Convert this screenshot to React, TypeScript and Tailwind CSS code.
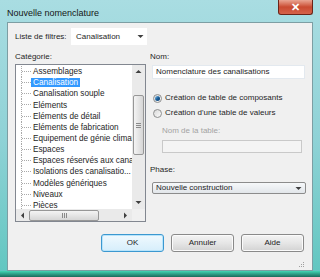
import React from 'react';

const items = [
  'Assemblages',
  'Canalisation',
  'Canalisation souple',
  'Eléments',
  'Eléments de détail',
  'Eléments de fabrication',
  'Equipement de génie climatique',
  'Espaces',
  'Espaces réservés aux canalisations',
  'Isolations des canalisatio...',
  'Modèles génériques',
  'Niveaux',
  'Pièces',
];

const Arrow = ({ dir }: { dir: 'up' | 'down' | 'left' | 'right' }) => {
  const pts = {
    up: '0.5,4 3.5,1 6.5,4',
    down: '0.5,1 3.5,4 6.5,1',
    left: '4,0.5 1,3.5 4,6.5',
    right: '1,0.5 4,3.5 1,6.5',
  }[dir];
  const w = dir === 'up' || dir === 'down' ? 7 : 5;
  const h = dir === 'up' || dir === 'down' ? 5 : 7;
  return (
    <svg width={w} height={h} viewBox={`0 0 ${w} ${h}`}>
      <polygon points={pts} fill="#404040" />
    </svg>
  );
};

const TreeLine = () => (
  <svg width="15" height="11.2" viewBox="0 0 15 11.2" className="shrink-0">
    <line x1="5.5" y1="0" x2="5.5" y2="11.2" stroke="#a8a8a8" strokeDasharray="1 1" />
    <line x1="6" y1="5.5" x2="15" y2="5.5" stroke="#a8a8a8" strokeDasharray="1 1" />
  </svg>
);

function Radio({ checked }: { checked?: boolean }) {
  return (
    <div className="w-[9px] h-[9px] rounded-full border border-[#8e8f8f] bg-gradient-to-br from-[#d9d9d9] to-[#fbfbfb] flex items-center justify-center shrink-0">
      {checked && (
        <div className="w-[5px] h-[5px] rounded-full bg-gradient-to-br from-[#8ccbf0] via-[#1a5f9a] to-[#0b3c6e]" />
      )}
    </div>
  );
}

function Button({ label, isDefault }: { label: string; isDefault?: boolean }) {
  return (
    <div
      className={
        'w-[63px] h-[18px] rounded-[3px] border flex items-center justify-center text-[8px] text-[#1e1e1e] ' +
        (isDefault
          ? 'border-[#3c98d0] bg-gradient-to-b from-[#f0f9fe] to-[#d6eefb] shadow-[inset_0_0_0_1px_#b8e4fb]'
          : 'border-[#8a8a8a] bg-gradient-to-b from-[#f4f4f4] via-[#e6e6e6] to-[#d2d2d2] shadow-[inset_0_0_0_1px_#fbfbfb]')
      }
    >
      {label}
    </div>
  );
}

export default function App() {
  return (
    <div className="w-[320px] h-[277px] overflow-hidden flex flex-col bg-gradient-to-b from-[#a9dde2] via-[#8fd2d6] to-[#5fc6c0] font-['Liberation_Sans',Arial,sans-serif]">
      {/* title bar */}
      <div className="h-[22px] flex items-start pl-[7px] pr-[7px] shrink-0">
        <div className="text-[9px] text-[#151515] mt-[7px] flex-1">Nouvelle nomenclature</div>
        <div className="w-[35px] h-[15px] rounded-b-[3px] border border-t-0 border-[#6b2418] bg-gradient-to-b from-[#e9a593] via-[#c94a31] to-[#d5634a] flex items-center justify-center text-white text-[11px] font-bold leading-none">
          ✕
        </div>
      </div>

      {/* client */}
      <div className="mx-[7px] h-[249px] bg-[#f0f0f0] border border-[#7d9ea3] flex flex-col px-[7px] pt-[5px] text-[8px] text-[#1e1e1e] shrink-0">
        <div className="flex items-center h-[17px]">
          <div className="w-[56px]">Liste de filtres:</div>
          <div className="w-[76px] h-[17px] bg-white flex items-center pl-[5px] pr-[3px]">
            <span className="flex-1">Canalisation</span>
            <Arrow dir="down" />
          </div>
        </div>

        <div className="flex mt-[7px]">
          {/* left column */}
          <div className="flex flex-col w-[131px]">
            <div className="h-[10px] leading-[10px]">Catégorie:</div>
            <div className="mt-[2px] w-[131px] h-[158px] border border-[#828790] bg-white flex flex-col">
              <div className="flex flex-1 min-h-0">
                <div className="flex-1 min-w-0 overflow-hidden pt-[1px]">
                  {items.map((it, i) => (
                    <div key={i} className="flex items-center h-[11.17px] whitespace-nowrap text-[8.2px]">
                      <TreeLine />
                      <span
                        className={
                          'px-[2px] leading-[9px] ' +
                          (i === 1 ? 'bg-[#3399ff] text-white' : 'text-[#1e1e1e]')
                        }
                      >
                        {it}
                      </span>
                    </div>
                  ))}
                </div>
                {/* vertical scrollbar */}
                <div className="w-[13px] bg-[#eaeaea] flex flex-col items-center">
                  <div className="h-[13px] flex items-center justify-center"><Arrow dir="up" /></div>
                  <div className="h-[17px]" />
                  <div className="w-[11px] h-[60px] rounded-[2px] border border-[#979797] bg-gradient-to-r from-[#f4f4f4] to-[#d6d6d6] flex flex-col items-center justify-center gap-[1px]">
                    <div className="w-[5px] h-px bg-[#8a8a8a]" />
                    <div className="w-[5px] h-px bg-[#8a8a8a]" />
                    <div className="w-[5px] h-px bg-[#8a8a8a]" />
                  </div>
                  <div className="flex-1" />
                  <div className="h-[13px] flex items-center justify-center"><Arrow dir="down" /></div>
                </div>
              </div>
              {/* horizontal scrollbar */}
              <div className="flex h-[12px]">
                <div className="flex-1 bg-[#eaeaea] flex items-center">
                  <div className="w-[13px] flex items-center justify-center"><Arrow dir="left" /></div>
                  <div className="w-[70px] h-[11px] rounded-[2px] border border-[#979797] bg-gradient-to-b from-[#f4f4f4] to-[#d6d6d6] flex items-center justify-center gap-[1px]">
                    <div className="w-px h-[5px] bg-[#8a8a8a]" />
                    <div className="w-px h-[5px] bg-[#8a8a8a]" />
                    <div className="w-px h-[5px] bg-[#8a8a8a]" />
                  </div>
                  <div className="flex-1" />
                  <div className="w-[13px] flex items-center justify-center"><Arrow dir="right" /></div>
                </div>
                <div className="w-[13px] bg-[#f0f0f0]" />
              </div>
            </div>
          </div>

          {/* right column */}
          <div className="flex flex-col ml-[4px] flex-1">
            <div className="h-[10px] leading-[10px]">Nom:</div>
            <div className="mt-[3px] ml-[2px] w-[153px] h-[14px] bg-white border border-[#e3e9ef] flex items-center pl-[3px]">
              Nomenclature des canalisations
            </div>
            <div className="mt-[14px] ml-[3px] flex items-center h-[10px] gap-[3px]">
              <Radio checked />
              <span>Création de table de composants</span>
            </div>
            <div className="mt-[5px] ml-[3px] flex items-center h-[10px] gap-[3px]">
              <Radio />
              <span>Création d'une table de valeurs</span>
            </div>
            <div className="mt-[8px] ml-[12px] h-[10px] leading-[10px] text-[#a3a3a3]">Nom de la table:</div>
            <div className="mt-[4px] ml-[12px] w-[140px] h-[13px] bg-[#f4f4f4] border border-[#c9c9c9]" />
            <div className="mt-[12px] h-[10px] leading-[10px]">Phase:</div>
            <div className="mt-[7px] ml-[2px] w-[154px] h-[12px] border border-[#8c8c8c] rounded-[2px] bg-gradient-to-b from-[#f6f8fa] to-[#e2e6ea] flex items-center pl-[3px] pr-[3px]">
              <span className="flex-1">Nouvelle construction</span>
              <Arrow dir="down" />
            </div>
          </div>
        </div>

        <div className="flex justify-end gap-[7px] mt-[12px] pr-[1px]">
          <Button label="OK" isDefault />
          <Button label="Annuler" />
          <Button label="Aide" />
        </div>
        <div className="flex-1 flex justify-end items-end pb-[2px]">
          <svg width="6" height="6" viewBox="0 0 6 6">
            <rect x="4" y="0" width="1" height="1" fill="#a0a0a0" />
            <rect x="2" y="2" width="1" height="1" fill="#a0a0a0" />
            <rect x="4" y="2" width="1" height="1" fill="#a0a0a0" />
            <rect x="0" y="4" width="1" height="1" fill="#a0a0a0" />
            <rect x="2" y="4" width="1" height="1" fill="#a0a0a0" />
            <rect x="4" y="4" width="1" height="1" fill="#a0a0a0" />
          </svg>
        </div>
      </div>
      <div className="flex-1 bg-gradient-to-b from-[#44d6b4] to-[#1b6a5c]" />
    </div>
  );
}
